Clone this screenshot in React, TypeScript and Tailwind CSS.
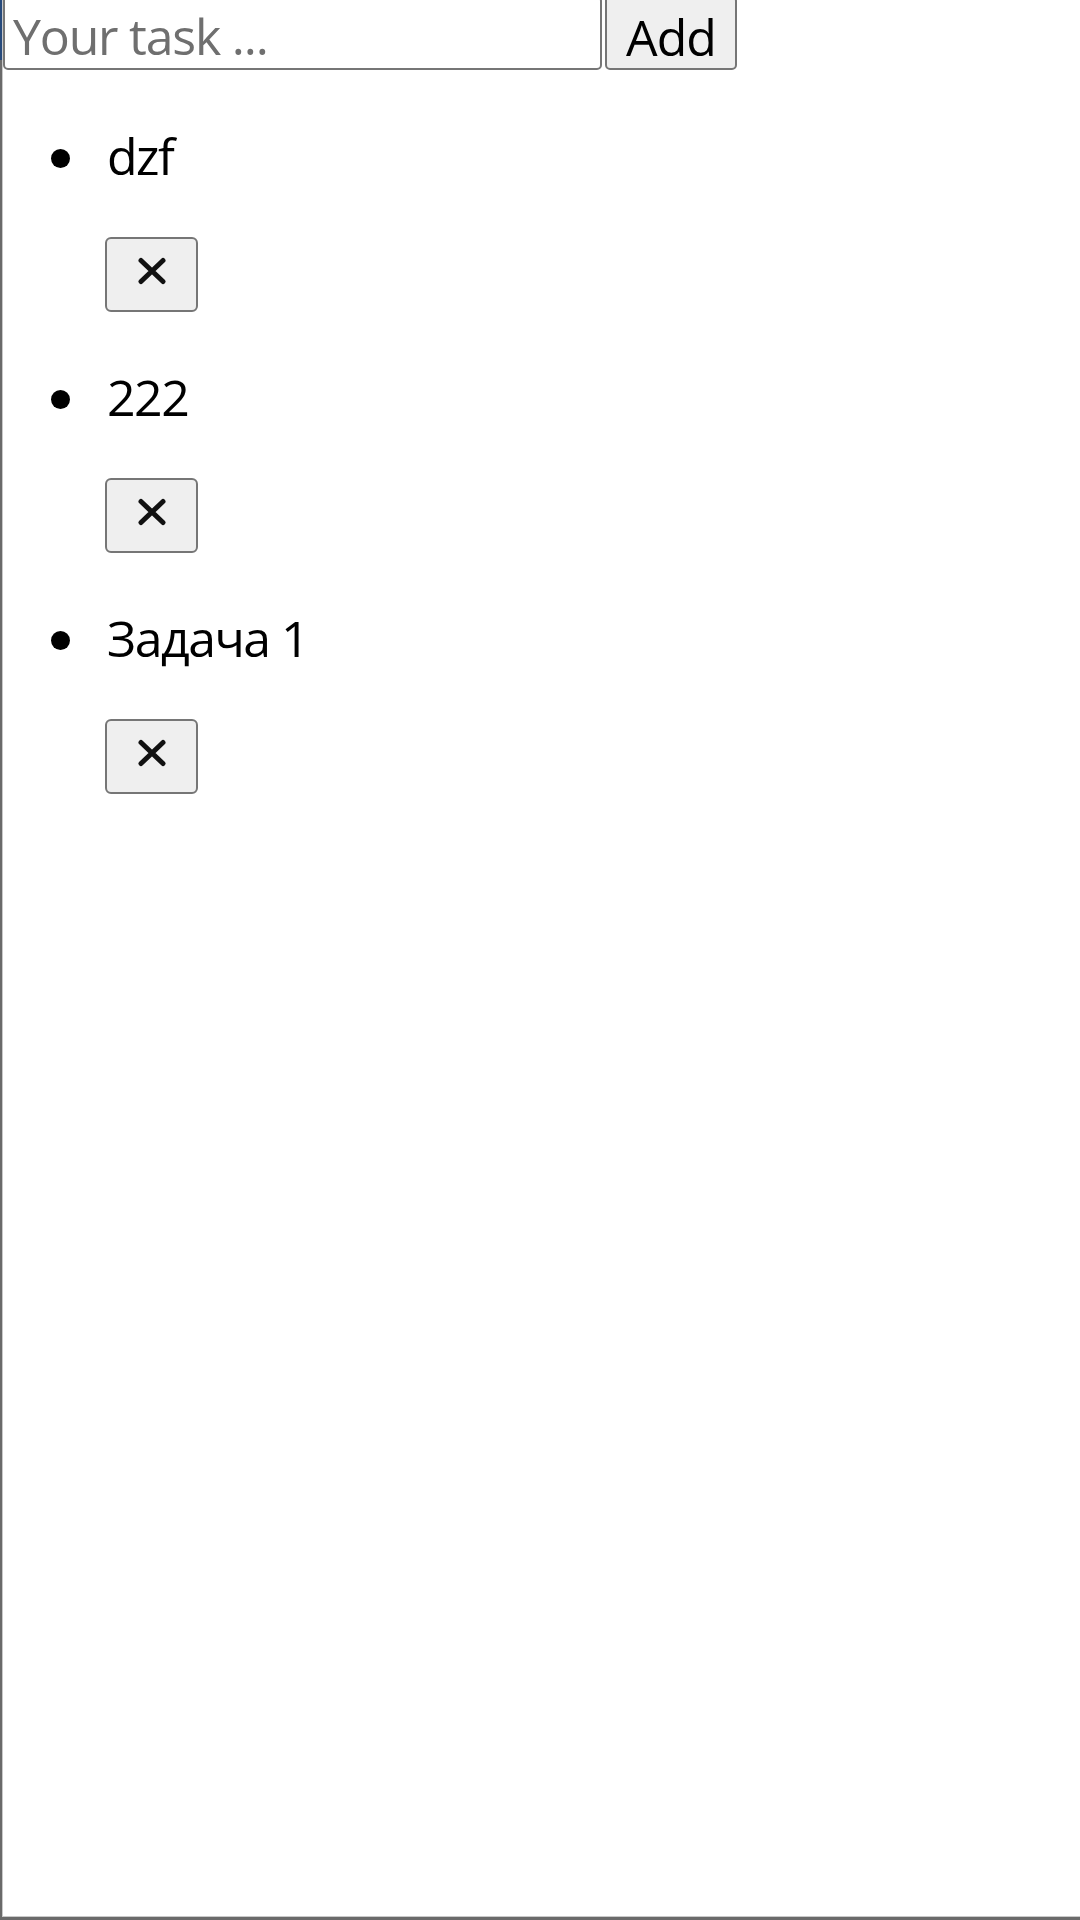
import { useState } from "react";

const font = { fontFamily: '"Open Sans", "Noto Sans", sans-serif' };

function CloseIcon() {
  return (
    <svg width="30" height="28" viewBox="0 0 30 28" fill="none">
      <path d="M4 3.5 L26 24.5 M26 3.5 L4 24.5" stroke="#111" strokeWidth="5" strokeLinecap="round" />
    </svg>
  );
}

export default function App() {
  const [tasks, setTasks] = useState<string[]>(["dzf", "222", "Задача 1"]);
  const [value, setValue] = useState("");

  const add = () => {
    if (!value.trim()) return;
    setTasks([...tasks, value.trim()]);
    setValue("");
  };

  return (
    <div style={font} className="relative h-[1920px] w-[1080px] overflow-hidden bg-white">
      <div className="flex h-full flex-col border-b-[3px] border-l-2 border-[#6a6a6a]">
        <div className="flex h-full flex-col border-b border-l border-[#c9c9c9]">
          <div className="-mt-[4px] flex h-[74px] gap-[3px]">
            <input
              value={value}
              onChange={(e) => setValue(e.target.value)}
              placeholder="Your task ..."
              className="h-full w-[599px] shrink-0 rounded-[5px] border-2 border-[#767676] bg-white pl-[8px] pt-[5px] text-[50px] tracking-[-1.2px] text-black outline-none placeholder:text-[#6f6f6f]"
            />
            <button
              onClick={add}
              className="h-full w-[132px] shrink-0 rounded-[5px] border-2 border-[#767676] bg-[#efefef] pt-[2px] text-[50px] tracking-[-1px] text-black"
            >
              Add
            </button>
          </div>

          <ul className="mt-[55px] flex flex-col gap-[54px]">
            {tasks.map((t, i) => (
              <li key={i} className="flex flex-col">
                <div className="flex h-[62px] items-start">
                  <span className="ml-[48px] mt-[24px] h-[19px] w-[19px] rounded-full bg-black" />
                  <span className="ml-[37px] text-[50px] leading-[62px] tracking-[-1.5px] text-black">{t}</span>
                </div>
                <button
                  onClick={() => setTasks(tasks.filter((_, j) => j !== i))}
                  className="ml-[102px] mt-[50px] flex h-[75px] w-[93px] items-center justify-center rounded-[6px] border-2 border-[#767676] bg-[#efefef] pb-[8px]"
                >
                  <CloseIcon />
                </button>
              </li>
            ))}
          </ul>
        </div>
      </div>
      <div className="absolute left-0 top-0 h-[60px] w-[2px] bg-[#274a7c]" />
    </div>
  );
}
